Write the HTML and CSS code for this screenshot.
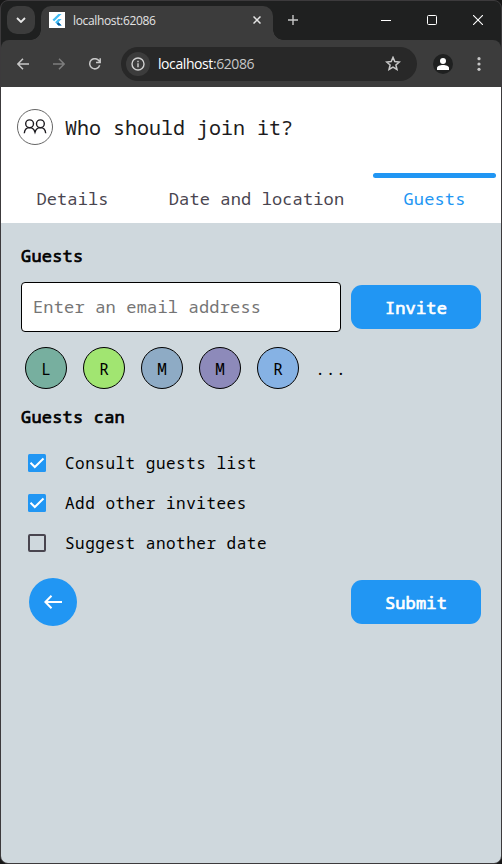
FILE: index.html
```html
<!DOCTYPE html>
<html lang="en">
<head>
<meta charset="utf-8">
<title>localhost:62086</title>
<link rel="stylesheet" href="styles.css">
</head>
<body>
<div class="window">
  <div class="titlebar">
    <div class="tab-search"><svg width="10" height="6" viewBox="0 0 10 6"><path d="M1 1l4 4 4-4" fill="none" stroke="#e8e8e8" stroke-width="1.8"/></svg></div>
    <div class="browser-tab">
      <svg class="favicon" width="16" height="16" viewBox="0 0 16 16"><rect width="16" height="16" fill="#fff"/><path d="M9.4 2h3.2L5.2 9.2 3.5 7.7z" fill="#42bdf5"/><path d="M9.4 7h3.2L9.4 10.2l3.2 3.3H9.4L6.1 10.2z" fill="#42bdf5"/><path d="M7.8 11.8l1.6-1.6 3.2 3.3H9.4z" fill="#075b9d"/></svg>
      <span class="tab-title">localhost:62086</span>
      <svg width="8" height="8" viewBox="0 0 8 8"><path d="M.5.5l7 7m0-7l-7 7" stroke="#e3e3e3" stroke-width="1.5"/></svg>
    </div>
    <svg class="new-tab" width="10" height="10" viewBox="0 0 10 10"><path d="M5 0v10M0 5h10" stroke="#c8c8c8" stroke-width="1.4"/></svg>
    <div class="window-controls">
      <svg width="10" height="10" viewBox="0 0 10 10"><path d="M0 5.5h10" stroke="#fff"/></svg>
      <svg width="10" height="10" viewBox="0 0 10 10"><rect x=".5" y=".5" width="9" height="9" rx="1" fill="none" stroke="#fff"/></svg>
      <svg width="10" height="10" viewBox="0 0 10 10"><path d="M0 0l10 10M10 0L0 10" stroke="#fff" stroke-width="1.1"/></svg>
    </div>
  </div>
  <div class="toolbar">
    <svg class="nav" width="12" height="12" viewBox="0 0 12 12"><path d="M12 6H1M6 .8L.9 6 6 11.200" fill="none" stroke="#c7c7c7" stroke-width="1.5"/></svg>
    <svg class="nav" width="12" height="12" viewBox="0 0 12 12"><path d="M0 6h11M6 .8L11.100 6 6 11.200" fill="none" stroke="#7d7d7d" stroke-width="1.5"/></svg>
    <svg class="nav" width="12" height="12" viewBox="0 0 12 12"><path d="M10.700 7.300A5.100 5.100 0 1 1 10 2.800L11 4M11.200.2v4.300H7" fill="none" stroke="#c7c7c7" stroke-width="1.500"/></svg>
    <div class="address">
      <span class="info"><svg width="14" height="14" viewBox="0 0 14 14"><circle cx="7" cy="7" r="6" fill="none" stroke="#d0d0d0" stroke-width="1.4"/><path d="M7 6.300v4M7 3.700v1.500" stroke="#d0d0d0" stroke-width="1.4"/></svg></span>
      <span class="url">localhost<span class="port">:62086</span></span>
      <svg class="star" width="16" height="15" viewBox="0 0 16 15"><path d="M8 1.400l1.800 4.200 4.600.4-3.500 3 1.100 4.500L8 11.100l-4 2.400L5.100 9 1.600 6l4.600-.4z" fill="none" stroke="#c7c7c7" stroke-width="1.500"/></svg>
    </div>
    <svg class="profile" width="20" height="20" viewBox="0 0 20 20"><circle cx="10" cy="10" r="10" fill="#1f2020"/><circle cx="10" cy="7" r="3" fill="#fff"/><path d="M4 16v-2c0-2 3-3 6-3s6 1 6 3v2z" fill="#fff"/></svg>
    <svg class="more" width="4" height="14" viewBox="0 0 4 14"><g fill="#c7c7c7"><circle cx="2" cy="1.700" r="1.600"/><circle cx="2" cy="7" r="1.600"/><circle cx="2" cy="12.300" r="1.600"/></g></svg>
  </div>
  <main class="page">
    <header class="heading">
      <svg width="36" height="36" viewBox="0 0 36 36"><circle cx="18" cy="18" r="17.500" fill="#fff" stroke="#666"/><g fill="none" stroke="#1d1b20" stroke-width="1.400"><circle cx="12.600" cy="14.800" r="3.900"/><circle cx="23.400" cy="14.800" r="3.900"/><path d="M7.300 24.200c.3-3.200 2.300-5.600 5.300-5.600 2.600 0 4.500 1.700 5.400 4.600.9-2.900 2.800-4.600 5.400-4.600 3 0 5 2.400 5.300 5.600"/></g></svg>
      <h1>Who should join it?</h1>
    </header>
    <nav class="tabs">
      <a class="tab details">Details</a>
      <a class="tab date">Date and location</a>
      <a class="tab guests active">Guests</a>
    </nav>
    <section class="content">
      <h2>Guests</h2>
      <div class="invite-row">
        <input class="email" type="text" placeholder="Enter an email address">
        <button class="button">Invite</button>
      </div>
      <div class="avatars">
        <span class="avatar teal">L</span>
        <span class="avatar green">R</span>
        <span class="avatar steel">M</span>
        <span class="avatar purple">M</span>
        <span class="avatar blue">R</span>
        <span class="ellipsis">...</span>
      </div>
      <h2>Guests can</h2>
      <div class="options">
        <div class="option"><svg width="18" height="18" viewBox="0 0 18 18"><rect width="18" height="18" rx="1.500" fill="#2196f3"/><path d="M2.500 8.700l4.300 4.300L15.500 4.500" fill="none" stroke="#fff" stroke-width="2"/></svg><span>Consult guests list</span></div>
        <div class="option"><svg width="18" height="18" viewBox="0 0 18 18"><rect width="18" height="18" rx="1.500" fill="#2196f3"/><path d="M2.500 8.700l4.300 4.300L15.500 4.500" fill="none" stroke="#fff" stroke-width="2"/></svg><span>Add other invitees</span></div>
        <div class="option"><svg width="18" height="18" viewBox="0 0 18 18"><rect x="1" y="1" width="16" height="16" rx="1" fill="none" stroke="#49454f" stroke-width="2"/></svg><span>Suggest another date</span></div>
      </div>
      <div class="actions">
        <button class="back" aria-label="Back"><svg width="18" height="14" viewBox="0 0 18 14"><path d="M18 7H1.500M7.500.8L1.400 7l6.100 6.200" fill="none" stroke="#fff" stroke-width="2"/></svg></button>
        <button class="button">Submit</button>
      </div>
    </section>
  </main>
</div>
</body>
</html>
```
FILE: styles.css
```css
* { box-sizing: border-box; }
html { background: #171717; }
body {
  margin: 0;
  font-family: "Noto Sans Mono", "Droid Sans Mono", "DejaVu Sans Mono", monospace;
}
svg { display: block; flex: none; }
h1, h2 { margin: 0; }
button { border: 0; padding: 0; font-family: inherit; }

.window {
  height: 864px;
  display: flex;
  flex-direction: column;
  overflow: hidden;
  border: 1px solid #3c3a3c;
  border-radius: 8px;
  background: #3c3c3c;
}

.titlebar {
  height: 46px;
  flex: none;
  display: flex;
  padding: 5px 0 0 6px;
  background: #1f2020;
}
.tab-search {
  width: 28px;
  height: 28px;
  border-radius: 10px;
  background: #3c3c3c;
  display: grid;
  place-items: center;
}
.browser-tab {
  position: relative;
  width: 232px;
  height: 34px;
  margin-left: 6px;
  padding: 0 12px 6px 8px;
  border-radius: 10px 10px 0 0;
  background: #3c3c3c;
  display: flex;
  align-items: center;
}
.browser-tab::before, .browser-tab::after {
  content: "";
  position: absolute;
  bottom: 0;
  width: 10px;
  height: 10px;
}
.browser-tab::before { left: -10px; background: radial-gradient(circle at 0 0, transparent 9.500px, #3c3c3c 10px); }
.browser-tab::after { right: -10px; background: radial-gradient(circle at 100% 0, transparent 9.500px, #3c3c3c 10px); }
.tab-title {
  flex: 1;
  margin-left: 8px;
  padding-top: 1px;
  font: 12px/16px "Open Sans", "Noto Sans", sans-serif;
  letter-spacing: -0.35px;
  color: #e3e3e3;
}
.new-tab { margin: 9px 0 0 15px; }
.window-controls {
  flex: 1;
  display: flex;
  justify-content: flex-end;
  gap: 36px;
  padding: 9px 18px 0 0;
}

.toolbar {
  height: 47px;
  flex: none;
  margin-top: -7px;
  padding: 0 20px 0 16px;
  border-radius: 8px 8px 0 0;
  background: #3c3c3c;
  display: flex;
  align-items: center;
  position: relative;
}
.nav + .nav { margin-left: 24px; }
.address {
  width: 297px;
  height: 34px;
  margin-left: 20px;
  padding: 0 16px 0 5px;
  border-radius: 17px;
  background: #282828;
  display: flex;
  align-items: center;
}
.info {
  width: 24px;
  height: 24px;
  border-radius: 50%;
  background: #3c3c3c;
  display: grid;
  place-items: center;
}
.url {
  flex: 1;
  margin-left: 8px;
  font: 14px/20px "Open Sans", "Noto Sans", sans-serif;
  letter-spacing: -0.42px;
  color: #fff;
}
.port { color: #c7c7c7; }
.profile { margin-left: 16px; }
.more { margin-left: 24px; }

.page {
  flex: 1;
  display: flex;
  flex-direction: column;
  background: #cfd8dd;
}
.heading {
  height: 82px;
  padding: 0 0 2px 16px;
  background: #fff;
  display: flex;
  align-items: center;
  gap: 12px;
}
h1 {
  padding-top: 2px;
  font-size: 20px;
  line-height: 28px;
  font-weight: 400;
  color: #1d1b20;
}
.tabs {
  height: 54px;
  padding: 4px 5px 0 4px;
  background: #fff;
  display: flex;
}
.tab {
  border-top: 5px solid transparent;
  padding-top: 9px;
  font-size: 17px;
  line-height: 24px;
  letter-spacing: 0.12px;
  text-align: center;
  white-space: nowrap;
  color: #49454f;
}
.details { width: 135px; }
.date { width: 233px; }
.guests { flex: 1; }
.tab.active {
  position: relative;
  color: #2196f3;
}
.tab.active::before {
  content: "";
  position: absolute;
  inset: -5px 0 auto;
  height: 5px;
  border-radius: 3px;
  background: #2196f3;
}

.content { padding: 21px 20px 0; }
h2 {
  font-size: 17px;
  line-height: 24px;
  font-weight: 400;
  letter-spacing: 0.2px;
  -webkit-text-stroke: 0.7px #000;
  color: #000;
}
.invite-row {
  display: flex;
  align-items: center;
  gap: 10px;
  margin-top: 14px;
}
.email {
  width: 320px;
  height: 50px;
  padding: 0 11px 2px;
  border: 1px solid #000;
  border-radius: 4px;
  background: #fff;
  font-family: inherit;
  font-size: 17px;
  letter-spacing: 0.17px;
}
.email::placeholder { color: #757575; }
.button {
  width: 130px;
  height: 44px;
  border-radius: 11px;
  background: #2196f3;
  font-size: 17px;
  letter-spacing: 0.17px;
  -webkit-text-stroke: 0.7px #fff;
  color: #fff;
}
.avatars {
  display: flex;
  gap: 16px;
  padding: 15px 4px 16px;
}
.avatar {
  width: 42px;
  height: 42px;
  padding-top: 2px;
  border: 1px solid #000;
  border-radius: 50%;
  display: grid;
  place-items: center;
  font-size: 16px;
  line-height: 24px;
  color: #000;
}
.teal { background: #77af9f; }
.green { background: #a1e571; }
.steel { background: #8eabc5; }
.purple { background: #8d8aba; }
.blue { background: #86b2e4; }
.ellipsis {
  padding-top: 1px;
  font-size: 17px;
  line-height: 41px;
  letter-spacing: 0.2px;
}
.options { margin-top: 14px; }
.option {
  height: 40px;
  padding-left: 7px;
  display: flex;
  align-items: center;
  gap: 19px;
  font-size: 16px;
  line-height: 24px;
  letter-spacing: 0.5px;
  color: #000;
}
.actions {
  display: flex;
  justify-content: space-between;
  align-items: center;
  margin-top: 15px;
  padding-left: 8px;
}
.back {
  width: 48px;
  height: 48px;
  border-radius: 50%;
  background: #2196f3;
  display: grid;
  place-items: center;
}
```
